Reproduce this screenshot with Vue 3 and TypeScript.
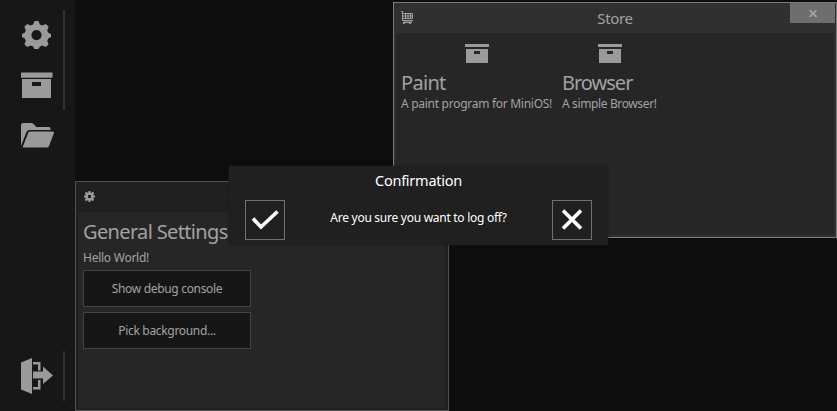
<script setup lang="ts">
interface StoreApp {
  name: string
  description: string
  slug: string
}

const apps: StoreApp[] = [
  { name: 'Paint', description: 'A paint program for MiniOS!', slug: 'paint' },
  { name: 'Browser', description: 'A simple Browser!', slug: 'browser' },
]
const actions: { label: string; slug: string }[] = [
  { label: 'Show debug console', slug: 'debug' },
  { label: 'Pick background...', slug: 'background' },
]
const gear =
  'M12.6 0h3.8l1.5 3.5 2.4 1 3.6-1.4 2.7 2.7-1.4 3.6 1 2.4 2.8 1.2v3l-2.8 1.4-1 2.4 1.4 3.4-2.7 2.7-3.6-1.4-2.4 1-1.5 2.8h-3.8l-1.5-2.8-2.4-1-3.6 1.4-2.7-2.7 1.4-3.4-1-2.4L0 16v-3l2.8-1.2 1-2.4-1.4-3.6 2.7-2.7 3.6 1.4 2.4-1z M14.5 9a5.1 5.1 0 1 0 0 10.2a5.1 5.1 0 1 0 0-10.2z'
</script>

<template>
  <main class="desktop">
    <nav class="dock">
      <div class="group top">
        <div class="icons">
          <svg class="gear" viewBox="0 0 29 28"><path fill-rule="evenodd" :d="gear" /></svg>
          <svg class="box" viewBox="0 0 32 26"><path fill-rule="evenodd" d="M0 .4h31.5v5.300H0z M1 7h29v19H1z M11 10v4h9v-4z" /></svg>
        </div>
        <span class="marker"></span>
      </div>
      <svg class="folder" viewBox="0 0 33 25">
        <path d="M0 2q0-2 2-2h8q1.5 0 2.5 1l3 3H28q1.5 0 1.5 1.5V7H8.500q-2 0-3 2L0 23z" />
        <path d="M9 8.500h22.500q2 0 1.300 2L28 23q-.5 1.500-2 1.500H1.500L7 10.500q.6-2 2-2z" />
      </svg>
      <div class="group bottom">
        <svg class="logoff" viewBox="0 0 32 36">
          <path d="M0 4.5 11 0v36L0 31.5z M12 4h7.500v8.500H17v-6h-5z M12 13.500h10V8.500l10 9-10 8.500v-5.500H12z M17 22h2.500v9.500H12V29h5z" />
        </svg>
        <span class="marker"></span>
      </div>
    </nav>

    <section class="window store">
      <header class="titlebar">
        <svg class="cart" viewBox="0 0 12 13">
          <path d="M0 .5h1.500V9.500H12 M2 2.500h9.500v5H2 M4.500 2v5 M7 2v5 M9.500 2v5 M2 5h9.500" fill="none" stroke="#aaa" stroke-width=".9" />
          <path d="M2 10.500h9V12H10v1H8v-1H4v1H2z" />
        </svg>
        <h1 class="title"><span>Store</span></h1>
        <button class="close" aria-label="Close">
          <svg viewBox="0 0 8 7"><path d="M.5 0 7.5 7M7.5 0 .5 7" /></svg>
        </button>
      </header>
      <div class="content catalog">
        <article v-for="app in apps" :key="app.slug" class="app" :class="app.slug">
          <svg class="package" viewBox="0 0 24 19"><path fill-rule="evenodd" d="M0 0h24v3H0z M1 5h22v14H1z M9 7v3h6V7z" /></svg>
          <h2>{{ app.name }}</h2>
          <p>{{ app.description }}</p>
        </article>
      </div>
    </section>

    <section class="window settings">
      <header class="titlebar">
        <svg class="mini-gear" viewBox="0 0 11 11"><path fill-rule="evenodd" d="M4.5 0h2v1.4l1 .3L8.8.8l1.4 1.4-.9 1.3.3 1H11v2H9.6l-.3 1 .9 1.3-1.4 1.4-1.3-.9-1 .3V11h-2V9.6l-1-.3-1.3.9L.8 8.8l.9-1.3-.3-1H0v-2h1.4l.3-1L.8 2.2 2.2.8l1.3.9 1-.3z M4 4v3h3V4z" /></svg>
      </header>
      <div class="content panel">
        <h2>General Settings</h2>
        <p>Hello World!</p>
        <button v-for="action in actions" :key="action.slug" class="action" :class="action.slug">
          <span>{{ action.label }}</span>
        </button>
      </div>
    </section>

    <section class="dialog" role="dialog">
      <h1><span>Confirmation</span></h1>
      <div class="dialog-row">
        <button class="choice" aria-label="Yes">
          <svg viewBox="0 0 38 38"><path d="M7 17.500 15 26 31.500 10.500" /></svg>
        </button>
        <p><span>Are you sure you want to log off?</span></p>
        <button class="choice" aria-label="No">
          <svg viewBox="0 0 38 38"><path d="M10 9.500 28 27.500M28 9.500 10 27.500" /></svg>
        </button>
      </div>
    </section>
  </main>
</template>

<style>
body { overflow: hidden; background: #0d0d0d; }
</style>

<style scoped>
* { box-sizing: border-box; }
.desktop { position: relative; width: 837px; height: 411px; overflow: hidden; background: #0d0d0d; color: #a2a2a2; font-family: "Noto Sans", "Open Sans", sans-serif; font-size: 12px; }
h1, h2, p { margin: 0; font-weight: 400; white-space: nowrap; }
button { padding: 0; font: inherit; color: inherit; border-radius: 0; }
svg { display: block; fill: #9a9a9a; flex: none; }
.dock { width: 75px; height: 411px; padding: 10px 10px 10px 21px; display: flex; flex-direction: column; background: #171717; }
.group { display: flex; justify-content: space-between; }
.top { height: 100px; }
.marker { width: 2px; background: #303030; }
.icons { padding-top: 11px; display: flex; flex-direction: column; gap: 23px; }
.gear { width: 29px; height: 28px; margin-left: 1px; }
.box { width: 32px; height: 26px; }
.folder { width: 33px; height: 25px; margin-top: 13px; }
.bottom { height: 50px; margin-top: auto; align-items: stretch; }
.logoff { width: 32px; height: 36px; margin-top: 7px; }
.window { position: absolute; border: 1px solid; padding: 0 2px 2px; display: flex; flex-direction: column; }
.store { left: 393px; top: 2px; width: 444px; height: 236px; background: #303030; border-color: #7b7b7b; }
.settings { left: 75px; top: 181px; width: 374px; height: 230px; background: #202020; border-color: #505050; }
.titlebar { height: 30px; flex: none; display: flex; }
.content { flex: 1; background: #262626; }
.cart { width: 12px; height: 13px; margin: 8px 0 0 5px; }
.title { flex: 1; padding-left: 27px; text-align: center; font-size: 15px; line-height: 31px; }
.title span { letter-spacing: -.35px; }
.close { width: 45px; height: 20px; margin-right: -1px; display: flex; align-items: center; justify-content: center; background: #6e6e6e; border: 0; }
.close svg { width: 8px; height: 7px; margin-top: 1px; stroke: #aaa; stroke-width: 1.5; }
.catalog { display: flex; gap: 10px; padding: 11px 5px; }
.app { display: flex; flex-direction: column; }
.paint { width: 151px; }
.browser { width: 95px; }
.package { width: 24px; height: 19px; align-self: center; }
h2 { font-size: 20px; line-height: 27px; }
.app h2 { margin-top: 6px; letter-spacing: -.7px; }
.browser h2 { letter-spacing: -1px; }
.app p { line-height: 16px; letter-spacing: -.28px; }
.browser p { letter-spacing: -.37px; }
.mini-gear { width: 11px; height: 11px; margin: 9px 0 0 6px; }
.panel { padding: 6px 5px; }
.panel h2 { letter-spacing: -.65px; }
.panel p { margin-top: 5px; line-height: 16px; letter-spacing: -.25px; }
.action { width: 168px; height: 37px; display: block; margin-bottom: 5px; background: #161616; border: 1px solid #444; letter-spacing: -.32px; }
.panel p + .action { margin-top: 4px; }
.dialog { position: absolute; left: 229px; top: 166px; width: 379px; height: 79px; background: #202020; color: #fff; box-shadow: 0 0 2px #1b1b1b; }
.dialog h1 { height: 29px; border-bottom: 1px solid #232323; font-size: 14.5px; line-height: 29px; text-align: center; letter-spacing: -.25px; }
.dialog-row { display: flex; justify-content: space-between; align-items: flex-start; padding: 5px 16px; }
.dialog p { line-height: 36px; letter-spacing: -.27px; }
.choice { width: 40px; height: 40px; background: #202020; border: 1px solid #707070; }
.choice svg { width: 38px; height: 38px; fill: none; stroke: #fff; stroke-width: 3.7; }
</style>
